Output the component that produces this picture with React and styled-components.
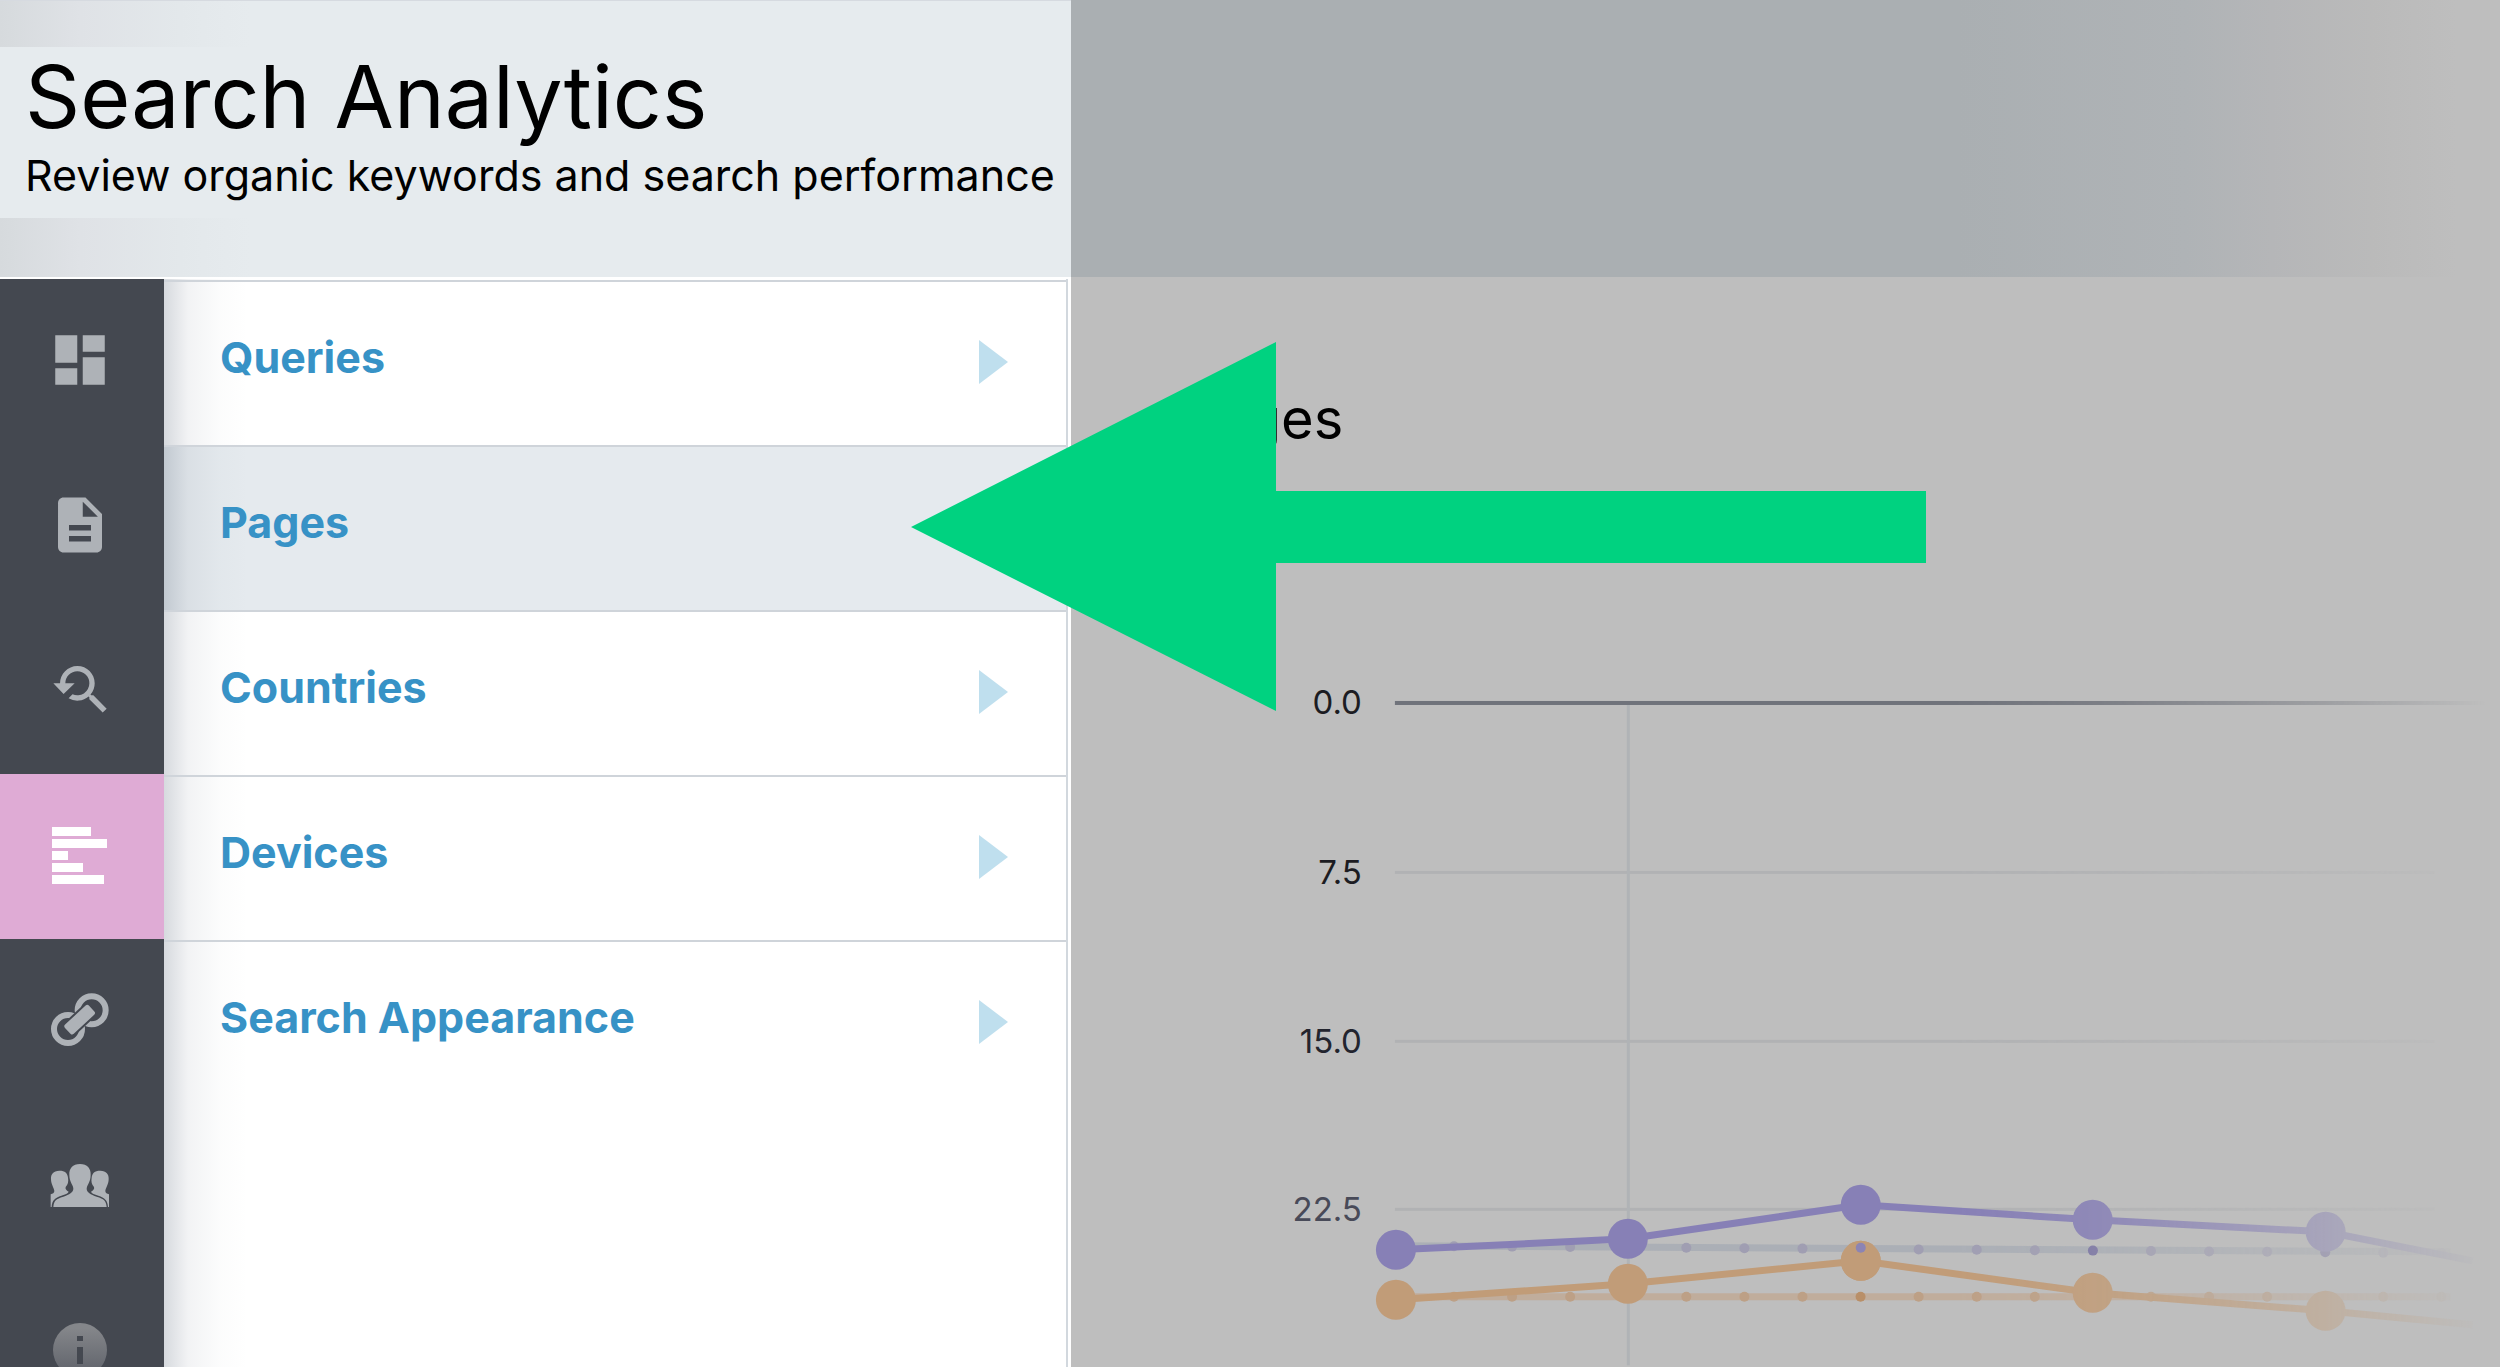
import React, { useState } from 'react';
import styled, { createGlobalStyle } from 'styled-components';
import { MdDashboard, MdDescription, MdYoutubeSearchedFor } from 'react-icons/md';

const BarsIcon = () => (
    <svg width="55" height="57" viewBox="0 0 55 57" fill="currentColor" aria-hidden="true">
        <path d="M0 0h39v9H0zM0 12h55v9H0zM0 24h16v9H0zM0 36h31v9H0zM0 48h52v9H0z" />
    </svg>
)

const LinkIcon = () => (
    <svg width="60" height="54" viewBox="30 38 180 162" fill="none" aria-hidden="true">
        <circle cx="155" cy="90" r="42" stroke="currentColor" strokeWidth="18" />
        <circle cx="84" cy="146" r="42" stroke="currentColor" strokeWidth="18" />
        <g transform="rotate(-43 119 118)">
            <rect x="64" y="93" width="110" height="50" rx="10" fill="#444850" />
            <rect x="70" y="99" width="98" height="38" rx="7" fill="currentColor" />
        </g>
    </svg>
)

const side = "M58 63C40 63 32 74 33 88C33 104 42 114 43 124C43 130 38 132 32 134V172H35C36 152 45 144 64 138C76 134 84 131 86 126C79 122 75 118 77 112C84 104 86 96 84 84C82 70 76 63 58 63Z";

const UsersIcon = () => (
    <svg width="60" height="45" viewBox="30 40 180 135" fill="currentColor" aria-hidden="true">
        <path d={side} />
        <path d={side} transform="matrix(-1 0 0 1 239 0)" />
        <path d="M120 43C98 43 87 57 88 75C88 98 100 106 100 117C100 128 88 134 70 141C48 148 42 152 40 172H200C198 152 192 148 170 141C152 134 140 128 140 117C140 106 152 98 152 75C153 57 142 43 120 43Z" />
    </svg>
)

const InfoIcon = () => (
    <svg width="56" height="56" viewBox="0 0 56 56" aria-hidden="true">
        <defs>
            <linearGradient id="infoFade" x1="0" y1="0" x2="0" y2="1">
                <stop offset="0.1" stopColor="#84868a" />
                <stop offset="0.8" stopColor="#666970" />
            </linearGradient>
        </defs>
        <circle cx="28" cy="28" r="27" fill="url(#infoFade)" />
        <path d="M25 14h6v5h-6zM25 25h6v17h-6z" fill="#444850" />
    </svg>
)

const navItems = [
    { id: 'dashboard', label: 'Dashboard', icon: <MdDashboard size={66} /> },
    { id: 'documents', label: 'Documents', icon: <MdDescription size={66} /> },
    { id: 'search', label: 'Search', icon: <MdYoutubeSearchedFor size={64} /> },
    { id: 'analytics', label: 'Analytics', icon: <BarsIcon /> },
    { id: 'links', label: 'Links', icon: <LinkIcon /> },
    { id: 'users', label: 'Users', icon: <UsersIcon /> },
    { id: 'info', label: 'Info', icon: <InfoIcon /> },
];

const menuItems = ['Queries', 'Pages', 'Countries', 'Devices', 'Search Appearance'];

const xs = [325, 557, 790, 1022, 1255];
const clicks = [611, 600, 566, 581, 593];
const impressions = [661, 645, 622, 654, 672];
const ticks = [
    { y: 63, label: '0.0', color: '#1c1c22' },
    { y: 233, label: '7.5', color: '#1c1c22' },
    { y: 402, label: '15.0', color: '#22242e' },
    { y: 570, label: '22.5', color: '#484a58' },
];

const toPoints = (ys, endY) => xs.map((x, i) => `${x},${ys[i]}`).join(' ') + ` 1402,${endY}`;

const TrendDots = ({ y, slope, color, strong }) => {
    let dots = [];
    for (let i = 1; i < 20; i++) {
        const x = 325 + i * 58.1;
        dots.push(<circle key={i} cx={x} cy={y + i * slope} r="5" fill={i % 4 === 0 ? strong : color} />);
    }
    return dots;
}

const Chart = () => (
    <ChartSvg viewBox="0 0 1429 727" role="img" aria-label="Position over time">
        <defs>
            <linearGradient id="fadeRight" gradientUnits="userSpaceOnUse" x1="0" y1="0" x2="1429" y2="0">
                <stop offset="0.62" stopColor="#fff" />
                <stop offset="0.72" stopColor="#fff" stopOpacity="0.85" />
                <stop offset="0.88" stopColor="#fff" stopOpacity="0.4" />
                <stop offset="0.99" stopColor="#fff" stopOpacity="0" />
            </linearGradient>
            <mask id="fadeMask" maskUnits="userSpaceOnUse" x="0" y="0" width="1429" height="727">
                <rect width="1429" height="727" fill="url(#fadeRight)" />
            </mask>
        </defs>
        {ticks.map(t => (
            <text key={t.label} x="291" y={t.y + 12} textAnchor="end" fill={t.color}>{t.label}</text>
        ))}
        <g mask="url(#fadeMask)">
            {ticks.slice(1).map(t => (
                <rect key={t.label} x="324" y={t.y - 1} width="1040" height="3" fill="#b1b2b4" />
            ))}
            <rect x="556" y="66" width="3" height="661" fill="#b0b3b6" />
            <rect x="324" y="62" width="1100" height="4" fill="#70737b" />

            <path d="M325 658H1380" stroke="#c0ad9c" strokeWidth="7" />
            <TrendDots y={658} slope={0} color="#bda086" strong="#b98f68" />
            <polyline points={toPoints(impressions, 686)} fill="none" stroke="#c19c78" strokeWidth="7" />
            {xs.map((x, i) => <circle key={x} cx={x} cy={impressions[i]} r="20" fill="#c19c78" />)}

            <path d="M325 607L1380 613" stroke="#abafb6" strokeWidth="7" />
            <TrendDots y={607} slope={0.4} color="#a09eb2" strong="#7c76a4" />
            {/* the trend runs behind the orange marker here, only its dot stays on top */}
            <circle cx={xs[2]} cy={impressions[2]} r="20" fill="#c19c78" />
            <circle cx={xs[2]} cy="609" r="5" fill="#8c84b4" />
            <polyline points={toPoints(clicks, 622)} fill="none" stroke="#8780b6" strokeWidth="7" />
            {xs.map((x, i) => <circle key={x} cx={x} cy={clicks[i]} r="20" fill="#8780b6" />)}
        </g>
    </ChartSvg>
)

const App = () => {
    const [active, setActive] = useState('Pages');

    return (
        <>
            <GlobalStyle />
            <Page>
                <Drawer>
                    <Header>
                        <Heading>
                            <h1>Search Analytics</h1>
                            <p>Review organic keywords and search performance</p>
                        </Heading>
                    </Header>
                    <DrawerBody>
                        <Nav>
                            {navItems.map(item => (
                                <NavButton key={item.id} aria-label={item.label} $active={item.id === 'analytics'}>
                                    {item.icon}
                                </NavButton>
                            ))}
                        </Nav>
                        <Menu>
                            {menuItems.map(name => (
                                <MenuItem key={name} $active={name === active} onClick={() => setActive(name)}>
                                    <span>{name}</span>
                                    {name !== active && <Caret />}
                                </MenuItem>
                            ))}
                        </Menu>
                    </DrawerBody>
                </Drawer>
                <Content>
                    <ContentBar />
                    <ContentTitle>{active}</ContentTitle>
                    <Chart />
                </Content>
                <Arrow viewBox="0 0 1015 369" aria-hidden="true">
                    <path d="M0 185L365 0V149H1015V221H365V369Z" fill="#00d280" />
                </Arrow>
            </Page>
        </>
    )
}

const GlobalStyle = createGlobalStyle`
    * {
        box-sizing: border-box;
    }
    body {
        margin: 0;
        font-family: Inter, "Noto Sans", sans-serif;
    }
    h1, h2, p {
        margin: 0;
        font-weight: 400;
    }
    button {
        border: 0;
        padding: 0;
        font: inherit;
        cursor: pointer;
    }
`

const Page = styled.div`
    position: relative;
    display: grid;
    grid-template-columns: minmax(0, 3fr) minmax(0, 4fr);
    height: 100vh;
    overflow: hidden;
    background: #bebebe;
`

const Drawer = styled.aside`
    display: flex;
    flex-direction: column;
    background: #fff;
`

const Header = styled.header`
    height: 277px;
    flex: none;
    padding-top: 46px;
    border-top: 1px solid #d6dae0;
    background: linear-gradient(90deg, #d6dadd, #dfe2e6 80px, #e3e8eb 180px, #e6ebee 250px);
`

const Heading = styled.div`
    padding: 0 0 15px 25px;
    background: #e6ebee;
    color: #000;
    white-space: nowrap;
    h1 {
        font-size: 86px;
        line-height: 100px;
    }
    p {
        font-size: 43px;
        line-height: 56px;
    }
`

const DrawerBody = styled.div`
    display: flex;
    flex: 1;
    padding: 2px 3px 0 0;
`

const Nav = styled.nav`
    display: flex;
    flex-direction: column;
    flex: none;
    width: 164px;
    background: #444850;
`

const NavButton = styled.button`
    display: flex;
    align-items: center;
    justify-content: center;
    flex: none;
    height: 165px;
    padding: 0 5px 3px 0;
    color: ${p => p.$active ? '#fff' : '#aeb2b7'};
    background: ${p => p.$active ? '#dfabd5' : 'transparent'};
`

const shade = 'linear-gradient(90deg, rgba(70, 85, 105, .22), rgba(90, 100, 120, .08) 24px, rgba(90, 110, 120, .02) 56px, transparent 84px)';

const Menu = styled.div`
    display: flex;
    flex-direction: column;
    flex: 1;
    padding-top: 1px;
    border-right: 2px solid #d2d8de;
    background: ${shade} #fff;
`

const MenuItem = styled.button`
    display: flex;
    align-items: center;
    justify-content: space-between;
    height: 165px;
    padding: 0 58px 4px 56px;
    border-top: 2px solid #cfd4da;
    background: ${p => p.$active ? `${shade} #e5eaee` : 'transparent'};
    color: #3792c6;
    font-size: 43px;
    font-weight: 700;
    span {
        padding-bottom: 9px;
    }
`

const Caret = styled.i`
    border-left: 29px solid #bfdfee;
    border-top: 22px solid transparent;
    border-bottom: 22px solid transparent;
`

const Content = styled.main`
    display: flex;
    flex-direction: column;
`

const ContentBar = styled.div`
    flex: none;
    height: 277px;
    background: linear-gradient(90deg, #aaafb2 62%, #afb3b6 78%, #b5b6b8 84%, #bababa 91%, #bebebe 97%);
`

const ContentTitle = styled.h2`
    padding: 102px 0 180px 108px;
    font-size: 56px;
    line-height: 80px;
    color: #000;
`

const ChartSvg = styled.svg`
    display: block;
    flex: none;
    width: 100%;
    text {
        font-size: 33px;
    }
`

// callout pointing at the selected menu row
const Arrow = styled.svg`
    position: absolute;
    top: 342px;
    left: 36.44%;
    width: 40.6%;
    pointer-events: none;
`

export default App
